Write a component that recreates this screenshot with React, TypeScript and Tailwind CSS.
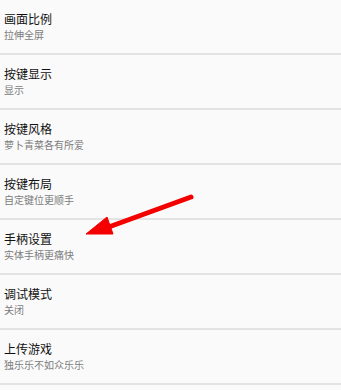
const items = [
  { title: "画面比例", desc: "拉伸全屏" },
  { title: "按键显示", desc: "显示" },
  { title: "按键风格", desc: "萝卜青菜各有所爱" },
  { title: "按键布局", desc: "自定键位更顺手" },
  { title: "手柄设置", desc: "实体手柄更痛快" },
  { title: "调试模式", desc: "关闭" },
  { title: "上传游戏", desc: "独乐乐不如众乐乐" },
];

export default function App() {
  return (
    <div className="relative w-[341px] h-[390px] overflow-hidden bg-[#fafafa] font-['Noto_Sans_CJK_SC',sans-serif]">
      {/*settings list*/}
      <div className="flex flex-col">
        {items.map((item) => (
          <div
            key={item.title}
            className="h-[55px] shrink-0 pt-[11px] pl-[4px] border-b-2 border-[#e3e3e3]"
          >
            <div className="text-[12px] leading-[16px] text-[#111111]">{item.title}</div>
            <div className="mt-[1px] text-[10px] leading-[14px] text-[#7c7c7c]">{item.desc}</div>
          </div>
        ))}
      </div>

      {/*red arrow annotation*/}
      <svg
        width="341"
        height="390"
        viewBox="0 0 341 390"
        className="absolute left-0 top-0 pointer-events-none"
        xmlns="http://www.w3.org/2000/svg"
      >
        <path
          d="M191 197L106 228"
          stroke="#f50000"
          strokeWidth="5"
          strokeLinecap="round"
          fill="none"
        />
        <path d="M86 234L107 217L113 234Z" fill="#f50000" stroke="#f50000" strokeWidth="1" strokeLinejoin="round" />
      </svg>
    </div>
  );
}
